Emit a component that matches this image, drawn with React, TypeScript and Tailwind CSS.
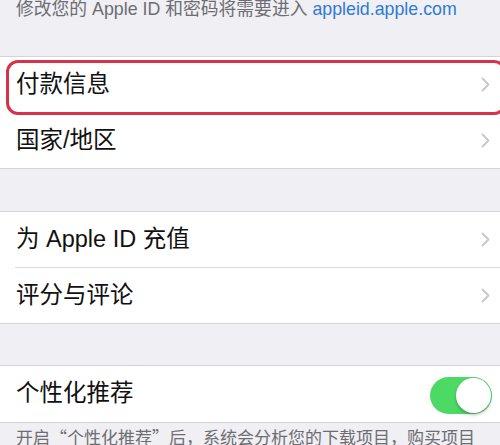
import React from "react";

const font = { fontFamily: '"Liberation Sans", "Noto Sans CJK SC", sans-serif' };
const cjkFirst = { fontFamily: '"Noto Sans CJK SC", "Liberation Sans", sans-serif' };

function Chevron() {
  return (
    <svg width="9" height="15" viewBox="0 0 9 15" className="shrink-0">
      <path d="M1.5 1.5 L7.5 7.5 L1.5 13.5" fill="none" stroke="#c7c7cc" strokeWidth="1.8" strokeLinecap="round" strokeLinejoin="round" />
    </svg>
  );
}

function Row({ label }: { label: string }) {
  return (
    <div className="flex items-center justify-between pl-4 pr-[10px] h-[55px]">
      <span className="text-[23.5px] text-[#111] leading-none">{label}</span>
      <Chevron />
    </div>
  );
}

function Sep() {
  return <div className="ml-[15px] h-px bg-[#d9d9de]" />;
}

export default function App() {
  return (
    <div className="relative w-[500px] h-[445px] overflow-hidden bg-[#efeff4]" style={font}>
      <div className="h-[57px] pl-4">
        <p className="text-[17.8px] leading-[20px] -mt-[1px] text-[#6d6d72] whitespace-nowrap">
          修改您的 Apple ID 和密码将需要进入 <span className="text-[#2e7ad6]">appleid.apple.com</span>
        </p>
      </div>

      <div className="bg-white border-y border-[#d3d3d8]">
        <Row label="付款信息" />
        <Sep />
        <Row label="国家/地区" />
      </div>

      <div className="h-[42px]" />

      <div className="bg-white border-y border-[#d3d3d8]">
        <Row label="为 Apple ID 充值" />
        <Sep />
        <Row label="评分与评论" />
      </div>

      <div className="h-[41px]" />

      <div className="bg-white border-y border-[#d3d3d8]">
        <div className="flex items-center justify-between pl-4 pr-2 h-[56px]">
          <span className="text-[23.5px] text-[#111] leading-none">个性化推荐</span>
          <div className="relative w-[62px] h-[37px] rounded-full bg-[#4cd964] mt-[2px]">
            <div className="absolute right-[1px] top-[1px] w-[35px] h-[35px] rounded-full bg-white shadow-[0_2px_3px_rgba(0,0,0,0.25)]" />
          </div>
        </div>
      </div>

      <p className="pl-4 pt-[4px] text-[17px] leading-[20px] text-[#6d6d72] whitespace-nowrap" style={cjkFirst}>
        开启“个性化推荐”后，系统会分析您的下载项目，购买项目
      </p>

      <div className="absolute left-[6px] top-[60px] w-[500px] h-[55px] rounded-[12px] border-[3px] border-[#d6334a]" />
    </div>
  );
}
